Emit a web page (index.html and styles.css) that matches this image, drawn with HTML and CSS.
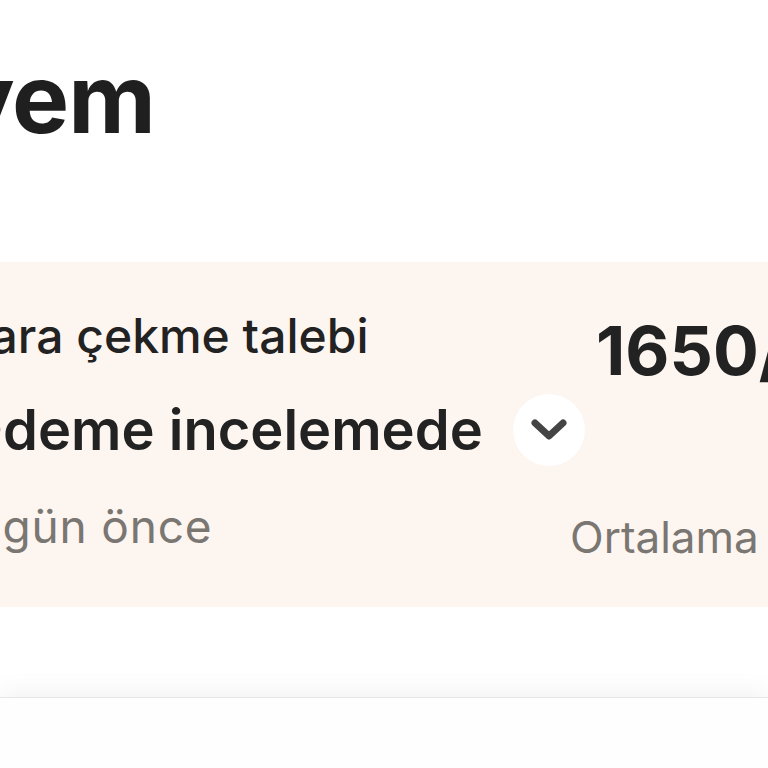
FILE: index.html
```html
<!DOCTYPE html>
<html lang="tr">
<head>
    <meta charset="utf-8">
    <title>Bakiyem</title>
    <link rel="stylesheet" href="styles.css">
</head>
<body>
    <div class="screen">
        <div class="head">
            <h1 class="title">Bakiyem</h1>
        </div>

        <div class="card">
            <div class="card-left">
                <p class="card-label">Para çekme talebi</p>
                <div class="status-row">
                    <p class="status">Ödeme incelemede</p>
                    <button class="toggle" type="button">
                        <svg width="36" height="22" viewBox="0 0 36 22">
                            <path d="M4 4 L18 17 L32 4" fill="none" stroke="#444" stroke-width="7" stroke-linecap="round" stroke-linejoin="round"/>
                        </svg>
                    </button>
                </div>
                <p class="card-time">2 gün önce</p>
            </div>
            <div class="card-right">
                <p class="amount">1650/2000</p>
                <p class="avg">Ortalama 3 gün</p>
            </div>
        </div>

        <div class="gap"></div>
    </div>

    <div class="tabbar"></div>
</body>
</html>
```

FILE: styles.css
```css
*{margin:0; padding:0; box-sizing:border-box;}
html, body{
    width:768px; height:768px;
    overflow:hidden;
    background:#fff;
    font-family:Inter, "Noto Sans", sans-serif;
    color:#222;
}
.screen{
    width:1200px;
    margin-left:-40px;
}
.head{
    height:262px;
    padding-top:40px;
}
.title{
    margin-left:-200px;
    font-size:96px;
    font-weight:700;
    line-height:116px;
    letter-spacing:-1px;
    color:#1f1f1f;
    white-space:nowrap;
}
.card{
    height:345px;
    background:#fdf5f0;
    display:flex;
}
.card-left{
    width:610px;
    flex-shrink:0;
    padding-top:42px;
    white-space:nowrap;
}
.card-label{
    font-size:48px;
    font-weight:550;
    line-height:64px;
}
.status-row{
    display:flex;
    align-items:center;
    gap:30px;
    margin-top:26px;
}
.status{
    font-size:56px;
    font-weight:600;
    line-height:72px;
}
.toggle{
    width:72px; height:72px;
    flex-shrink:0;
    border:none;
    border-radius:50%;
    background:#fff;
    display:flex;
    align-items:center;
    justify-content:center;
}
.card-time{
    margin-top:32px;
    font-size:46px;
    font-weight:400;
    letter-spacing:0.8px;
    line-height:56px;
    color:#7a7672;
}
.card-right{
    padding-top:48px;
    white-space:nowrap;
}
.amount{
    padding-left:26px;
    font-size:68px;
    font-weight:700;
    line-height:80px;
}
.avg{
    margin-top:119px;
    font-size:44px;
    font-weight:400;
    line-height:56px;
    color:#7a7672;
}
.gap{
    height:90px;
}
.tabbar{
    height:80px;
    background:#fefefe;
    border-top:1px solid #e6e6e6;
    box-shadow:0 -6px 24px rgba(0,0,0,0.05);
}
```
